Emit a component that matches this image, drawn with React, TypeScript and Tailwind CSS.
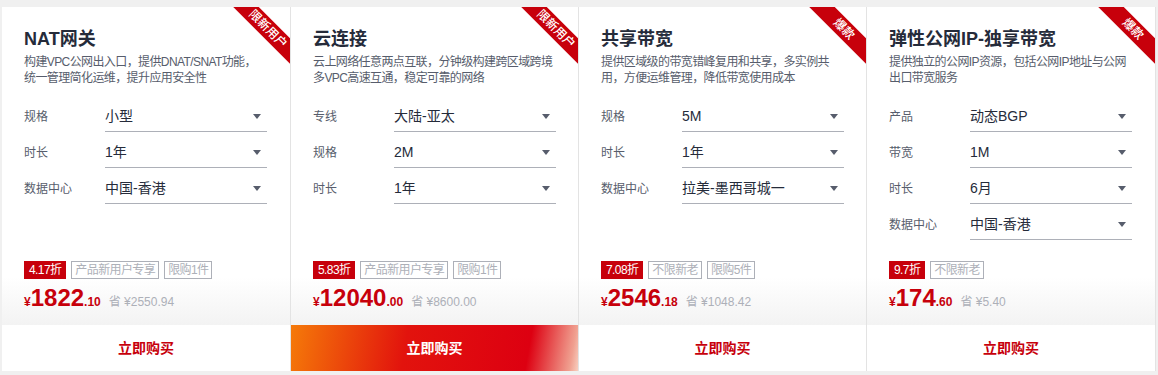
import React from 'react'

type Row = { label: string; value: string }

interface Product {
  title: string
  desc: string[]
  ribbon: string
  rows: Row[]
  discount: string
  tags: string[]
  price: string
  cents: string
  save: string
  highlight?: boolean
}

const products: Product[] = [
  {
    title: 'NAT网关',
    desc: ['构建VPC公网出入口，提供DNAT/SNAT功能，', '统一管理简化运维，提升应用安全性'],
    ribbon: '限新用户',
    rows: [
      { label: '规格', value: '小型' },
      { label: '时长', value: '1年' },
      { label: '数据中心', value: '中国-香港' },
    ],
    discount: '4.17折',
    tags: ['产品新用户专享', '限购1件'],
    price: '1822',
    cents: '.10',
    save: '省 ¥2550.94',
  },
  {
    title: '云连接',
    desc: ['云上网络任意两点互联，分钟级构建跨区域跨境', '多VPC高速互通，稳定可靠的网络'],
    ribbon: '限新用户',
    rows: [
      { label: '专线', value: '大陆-亚太' },
      { label: '规格', value: '2M' },
      { label: '时长', value: '1年' },
    ],
    discount: '5.83折',
    tags: ['产品新用户专享', '限购1件'],
    price: '12040',
    cents: '.00',
    save: '省 ¥8600.00',
    highlight: true,
  },
  {
    title: '共享带宽',
    desc: ['提供区域级的带宽错峰复用和共享，多实例共', '用，方便运维管理，降低带宽使用成本'],
    ribbon: '爆款',
    rows: [
      { label: '规格', value: '5M' },
      { label: '时长', value: '1年' },
      { label: '数据中心', value: '拉美-墨西哥城一' },
    ],
    discount: '7.08折',
    tags: ['不限新老', '限购5件'],
    price: '2546',
    cents: '.18',
    save: '省 ¥1048.42',
  },
  {
    title: '弹性公网IP-独享带宽',
    desc: ['提供独立的公网IP资源，包括公网IP地址与公网', '出口带宽服务'],
    ribbon: '爆款',
    rows: [
      { label: '产品', value: '动态BGP' },
      { label: '带宽', value: '1M' },
      { label: '时长', value: '6月' },
      { label: '数据中心', value: '中国-香港' },
    ],
    discount: '9.7折',
    tags: ['不限新老'],
    price: '174',
    cents: '.60',
    save: '省 ¥5.40',
  },
]

function Card({ p }: { p: Product }) {
  return (
    <div className="relative overflow-hidden bg-white border-r border-[#e3e3e3] flex flex-col">
      <div className="absolute right-[-28px] top-[13px] w-[100px] h-[18px] rotate-45 bg-[#c7000b] text-white text-[12px] leading-[18px] text-center font-medium">
        {p.ribbon}
      </div>
      <div className="h-[318px] px-[22px] pt-[20px] bg-linear-to-b from-white from-85% to-[#f3f3f3]">
        <div className="text-[18px] leading-[24px] font-bold text-[#252b3a]">{p.title}</div>
        <div className="mt-[3px] text-[12px] leading-[16px] text-[#575d6c] whitespace-nowrap tracking-[-0.6px]">
          {p.desc.map((d) => (
            <div key={d}>{d}</div>
          ))}
        </div>
        <div className="mt-[16px] flex flex-col gap-[6px]">
          {p.rows.map((r) => (
            <div key={r.label} className="flex items-center h-[30px]">
              <div className="w-[81px] text-[12px] text-[#575d6c]">{r.label}</div>
              <div className="w-[162px] h-[30px] flex items-center justify-between border-b border-[#adb0b8] pr-[6px]">
                <span className="text-[14px] text-[#252b3a]">{r.value}</span>
                <span className="w-0 h-0 border-l-[4px] border-r-[4px] border-t-[5px] border-l-transparent border-r-transparent border-t-[#575d6c]" />
              </div>
            </div>
          ))}
        </div>
      </div>
      <div className="absolute left-[22px] top-[254px] flex flex-col">
        <div className="flex gap-[5px] tracking-[-0.6px]">
          <span className="h-[18px] px-[5px] bg-[#c7000b] text-white text-[12px] leading-[18px]">{p.discount}</span>
          {p.tags.map((t) => (
            <span key={t} className="h-[18px] px-[3px] border border-[#adb0b8] text-[#adb0b8] text-[12px] leading-[16px]">
              {t}
            </span>
          ))}
        </div>
        <div className="mt-[4px] flex items-baseline text-[#c7000b]">
          <span className="text-[12px] font-bold">¥</span>
          <span className="text-[24px] leading-[30px] font-bold">{p.price}</span>
          <span className="text-[12px] font-bold">{p.cents}</span>
          <span className="ml-[8px] text-[12px] text-[#adb0b8]">{p.save}</span>
        </div>
      </div>
      {p.highlight ? (
        <div className="h-[46px] flex items-center justify-center text-[14px] font-bold text-white bg-[linear-gradient(100deg,#f57a09_0%,#e2130d_40%,#dd0011_82%,#f0a090_97%,#f8d0c0_100%)]">
          立即购买
        </div>
      ) : (
        <div className="h-[46px] flex items-center justify-center text-[14px] font-bold text-[#c7000b] bg-white">
          立即购买
        </div>
      )}
    </div>
  )
}

export default function App() {
  return (
    <div className="w-[1158px] h-[375px] bg-[#f0f0f0] pl-[2px] pt-[7px] font-['Liberation_Sans','Noto_Sans_CJK_SC',sans-serif]">
      <div className="grid grid-cols-[289px_288px_288px_289px] h-[364px]">
        {products.map((p) => (
          <Card key={p.title} p={p} />
        ))}
      </div>
    </div>
  )
}
